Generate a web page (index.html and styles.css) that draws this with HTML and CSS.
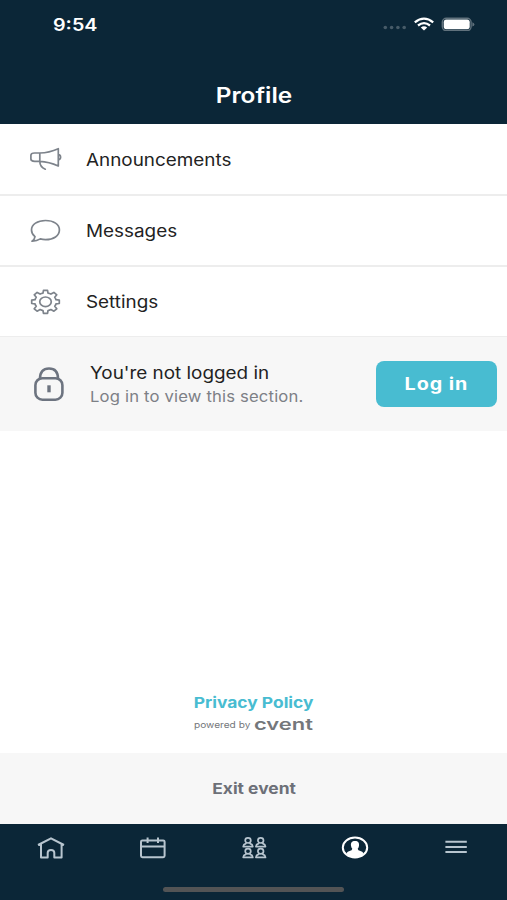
FILE: index.html
```html
<!DOCTYPE html>
<html lang="en">
<head>
<meta charset="utf-8">
<title>Profile</title>
<link rel="stylesheet" href="styles.css">
</head>
<body>
<div class="screen">
  <header class="header">
    <div class="status">
      <span class="time wide">9:54</span>
      <div class="indicators">
        <svg width="24" height="14" viewBox="0 0 24 14" fill="#475b68"><circle cx="3.3" cy="10.5" r="1.8"/><circle cx="9.6" cy="10.5" r="1.8"/><circle cx="15.9" cy="10.5" r="1.8"/><circle cx="22.2" cy="10.5" r="1.8"/></svg>
        <svg class="wifi" width="20" height="14" viewBox="0 0 20 14" fill="none" stroke="#fff" stroke-width="2.3"><path d="M.8 5.3Q10-2.1 19.2 5.3"/><path d="M4 8.5Q10 3.8 16 8.5"/><path d="M6.8 10.6Q10 8.1 13.2 10.6L10 13.5Z" fill="#fff" stroke="none"/></svg>
        <svg width="34" height="14" viewBox="0 0 34 14"><rect x="1.3" y="1.2" width="28.8" height="12.4" rx="4" fill="none" stroke="#60717c" stroke-width="1.4"/><rect x="2.7" y="2.6" width="26" height="9.6" rx="2.6" fill="#fff"/><path d="M31.4 5.2Q33.4 6 33.4 7.4T31.4 9.6Z" fill="#60717c"/></svg>
      </div>
    </div>
    <h1 class="title"><span class="wide">Profile</span></h1>
  </header>

  <main class="content">
    <nav class="menu">
      <a class="row">
        <svg class="row-icon" width="34" height="28" viewBox="0 0 34 28"><path d="M11.8 7H6.7Q2.9 7 2.9 9.3V13Q2.9 15.3 6.7 15.3H11.8ZM11.8 7Q21 6.8 30.3 2.7V20Q21 15.7 11.8 15.3M11.8 15.3Q11.8 21 17.3 23.2M30.3 8.7Q32.6 9 32.6 11.2T30.3 13.8"/></svg>
        <span class="wide">Announcements</span>
      </a>
      <a class="row">
        <svg class="row-icon" width="34" height="28" viewBox="0 0 34 28"><path d="M17.5 3.5C9.5 3.5 3.5 7.4 3.5 13C3.5 15.7 4.8 18 7 19.7Q6.7 22.5 4 24.2Q8.7 24.3 12.3 21.9Q14.8 22.6 17.5 22.6C25.7 22.6 31.4 18.7 31.4 13S25.7 3.5 17.5 3.5Z"/></svg>
        <span class="wide">Messages</span>
      </a>
      <a class="row">
        <svg class="row-icon" width="34" height="28" viewBox="0 0 34 28"><g transform="translate(17.5 13.8) scale(1.2 1)"><path vector-effect="non-scaling-stroke" d="M-1.7-11.5H1.7L2.1-8.7Q3.4-8.4 4.5-7.7L7-9.4L9.4-7L7.7-4.5Q8.4-3.4 8.7-2.1L11.5-1.7V1.7L8.7 2.1Q8.4 3.4 7.7 4.5L9.4 7L7 9.4L4.5 7.7Q3.4 8.4 2.1 8.7L1.7 11.5H-1.7L-2.1 8.7Q-3.4 8.4-4.5 7.7L-7 9.4L-9.4 7L-7.7 4.5Q-8.4 3.4-8.7 2.1L-11.5 1.7V-1.7L-8.7-2.1Q-8.4-3.4-7.7-4.5L-9.4-7L-7-9.4L-4.5-7.7Q-3.4-8.4-2.1-8.7Z"/><circle vector-effect="non-scaling-stroke" r="4.8"/></g></svg>
        <span class="wide">Settings</span>
      </a>
    </nav>

    <section class="login">
      <svg class="lock" width="32" height="36" viewBox="0 0 32 36" fill="none" stroke="#6d7480" stroke-width="2.6"><rect x="2.4" y="12.2" width="27" height="21.5" rx="7"/><path d="M7 12.7C7 6.2 10 2.5 16 2.5S25 6.2 25 12.7"/><path d="M16 19.3V26.3" stroke-width="3.4"/></svg>
      <div class="login-text">
        <p class="login-title"><span class="wide">You're not logged in</span></p>
        <p class="login-note"><span class="wide">Log in to view this section.</span></p>
      </div>
      <button class="login-button"><span class="wide">Log in</span></button>
    </section>

    <div class="legal">
      <a class="privacy"><span class="wide">Privacy Policy</span></a>
      <div class="powered"><span class="by wide">powered by</span><span class="brand wide">cvent</span></div>
    </div>
  </main>

  <div class="exit"><span class="wide">Exit event</span></div>

  <footer class="tabs">
    <div class="tab-list">
      <a class="tab"><svg width="30" height="24" viewBox="0 0 30 24"><path d="M2 9L15 2.3L28 9M5 7.5V21.6H11.7V16.8C11.7 12.9 18.3 12.9 18.3 16.8V21.6H25.6V7.5"/></svg></a>
      <a class="tab"><svg width="30" height="24" viewBox="0 0 30 24"><rect x="4" y="4.4" width="23.6" height="16.8" rx="1.4"/><path d="M4 10.6H27.6M10.6 1.6V7M21 1.6V7"/></svg></a>
      <a class="tab"><svg class="people" width="30" height="24" viewBox="0 0 30 24"><g id="person"><ellipse cx="9" cy="4.4" rx="2.8" ry="2.6"/><path d="M7.2 6.6L6.8 7.6Q4.4 8.3 4.2 10.6H13.8Q13.6 8.3 11.2 7.6L10.8 6.6"/></g><use href="#person" x="12.7"/><use href="#person" y="10.8"/><use href="#person" x="12.7" y="10.8"/></svg></a>
      <a class="tab"><svg width="30" height="24" viewBox="0 0 30 24"><ellipse cx="15" cy="11.5" rx="12.2" ry="10" class="ring"/><path d="M15 5C11.8 5 10.6 7 11 9.8Q11.2 11.8 12.3 12.8Q12.2 14.4 9.6 15.1Q7.6 15.7 6.4 17.3Q10 21.8 15 21.8T23.6 17.3Q22.4 15.7 20.4 15.1Q17.8 14.4 17.7 12.8Q18.8 11.8 19 9.8C19.4 7 18.2 5 15 5Z" fill="#fff" stroke="none"/></svg></a>
      <a class="tab"><svg width="30" height="24" viewBox="0 0 30 24"><path d="M4.4 5.8H25.8M4.4 11H25.8M4.4 16H25.8"/></svg></a>
    </div>
    <div class="home-bar"></div>
  </footer>
</div>
</body>
</html>
```

FILE: styles.css
```css
* { box-sizing: border-box; }

body {
  margin: 0;
  font-family: Inter, "Liberation Sans", sans-serif;
  color: #222;
  background: #fff;
}

.screen {
  display: flex;
  flex-direction: column;
  height: 900px;
}

.wide {
  display: inline-block;
  white-space: nowrap;
  transform: scaleX(1.16);
}

.header {
  height: 124px;
  background: #0b2637;
  color: #fff;
}

.status {
  display: flex;
  justify-content: space-between;
  height: 49px;
  padding: 15px 32px 0 53px;
}

.time {
  font-size: 17px;
  line-height: 21px;
  font-weight: 600;
  transform-origin: left;
}

.indicators {
  display: flex;
  padding-top: 2px;
}

.wifi { margin: 0 7px 0 8px; }

.title {
  margin: 32px 0 0;
  font-size: 21px;
  line-height: 30px;
  font-weight: 600;
  text-align: center;
}

.content {
  display: flex;
  flex-direction: column;
  height: 629px;
}

.menu { padding-top: 1px; }

.row {
  display: flex;
  align-items: center;
  gap: 24px;
  height: 71px;
  padding-left: 28px;
  border-bottom: 2px solid #ededed;
  font-size: 17px;
}

.row:last-child {
  height: 70px;
  border-bottom-width: 1px;
}

.row .wide,
.login-text .wide {
  transform: scaleX(1.11);
  transform-origin: left;
}

.row .wide { padding-top: 1px; }

.row-icon {
  fill: none;
  stroke: #7d838b;
  stroke-width: 1.7;
  stroke-linejoin: round;
  stroke-linecap: round;
}

.login {
  display: flex;
  align-items: center;
  height: 94px;
  padding: 0 10px 0 33px;
  background: #f7f7f7;
}

.login-text {
  flex: 1;
  margin-left: 25px;
  padding-top: 2px;
}

.login-text p {
  margin: 0;
  line-height: 24px;
}

.login-title { font-size: 17px; }

.login-note {
  font-size: 15px;
  letter-spacing: .15px;
  color: #7d8086;
}

.login-button {
  width: 121px;
  height: 46px;
  padding: 0;
  border: 0;
  border-radius: 8px;
  background: #48bcd1;
  color: #fff;
  font: 700 17px Inter, sans-serif;
  letter-spacing: .8px;
}

.legal {
  margin-top: auto;
  padding-bottom: 19px;
  text-align: center;
}

.privacy {
  display: block;
  font-size: 15px;
  line-height: 22px;
  font-weight: 700;
  color: #48bcd1;
}

.powered {
  display: flex;
  align-items: center;
  height: 20px;
  padding-left: 194px;
  color: #74777b;
  text-align: left;
}

.powered .wide { transform-origin: left; }

.by {
  width: 60px;
  padding-top: 1px;
  font-size: 8.5px;
}

.by.wide { transform: scaleX(1.19); }

.brand {
  font-size: 16px;
  line-height: 20px;
  font-weight: 600;
}

.brand.wide { transform: scaleX(1.37); }

.exit {
  display: flex;
  align-items: center;
  justify-content: center;
  height: 71px;
  padding-left: 1px;
  background: #f7f7f7;
  color: #6d7078;
  font-size: 15px;
  font-weight: 700;
}

.tabs {
  height: 76px;
  background: #0b2637;
}

.tab-list {
  display: flex;
  height: 63px;
  padding-top: 12px;
}

.tab {
  flex: 1;
  text-align: center;
}

.tab svg {
  fill: none;
  stroke: #b8c5cf;
  stroke-width: 2;
  stroke-linejoin: round;
}

.tab .people { stroke-width: 1.7; }

.tab .ring { stroke: #fff; }

.home-bar {
  width: 181px;
  height: 5px;
  margin: 0 auto;
  border-radius: 3px;
  background: #535455;
}
```
